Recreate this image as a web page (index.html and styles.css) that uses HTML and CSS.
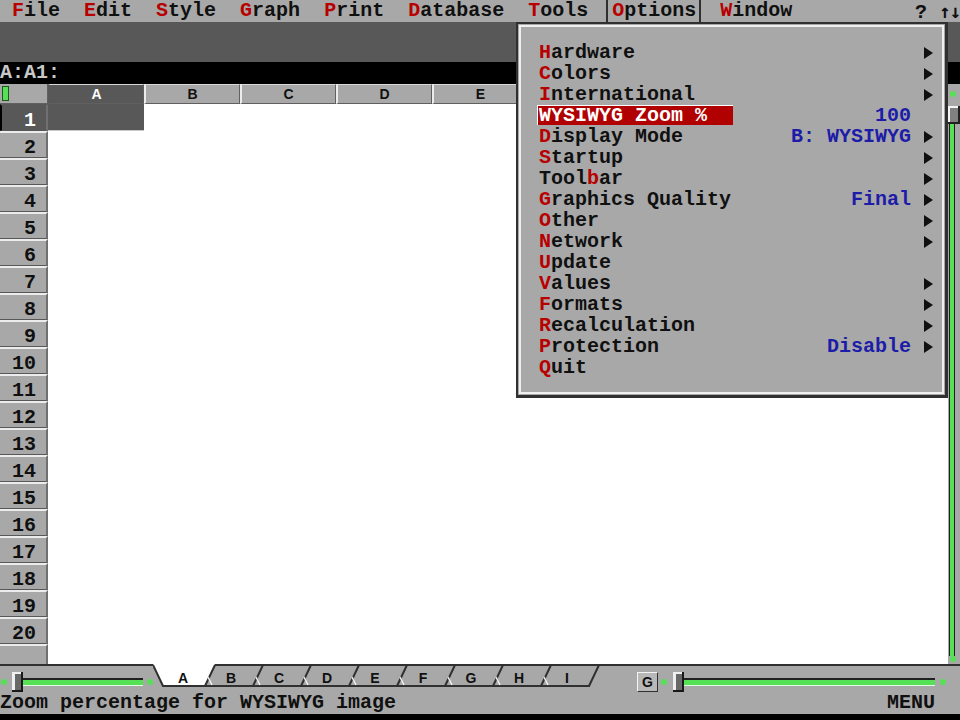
FILE: index.html
```html
<!DOCTYPE html>
<html>
<head>
<meta charset="utf-8">
<link rel="stylesheet" href="styles.css">
</head>
<body>
<div class="screen">
  <div class="menubar">
    <span class="mi"><span class="hk">F</span>ile</span>
    <span class="mi"><span class="hk">E</span>dit</span>
    <span class="mi"><span class="hk">S</span>tyle</span>
    <span class="mi"><span class="hk">G</span>raph</span>
    <span class="mi"><span class="hk">P</span>rint</span>
    <span class="mi"><span class="hk">D</span>atabase</span>
    <span class="mi"><span class="hk">T</span>ools</span>
    <span class="mi opt"><span class="hk">O</span>ptions</span>
    <span class="mi"><span class="hk">W</span>indow</span>
    <span class="help">? <span class="arrows">↑↓</span></span>
  </div>
  <div class="toolbar"></div>
  <div class="formula">A:A1:</div>
  <div class="work">
    <div class="sheet">
      <div class="colhead">
        <div class="corner"><span class="cur"></span></div>
        <div class="ch sel">A</div>
        <div class="ch">B</div>
        <div class="ch">C</div>
        <div class="ch">D</div>
        <div class="ch">E</div>
        <div class="ch rest"></div>
      </div>
      <div class="row"><div class="rh sel">1</div><div class="cell sel"></div></div>
      <div class="row"><div class="rh">2</div></div>
      <div class="row"><div class="rh">3</div></div>
      <div class="row"><div class="rh">4</div></div>
      <div class="row"><div class="rh">5</div></div>
      <div class="row"><div class="rh">6</div></div>
      <div class="row"><div class="rh">7</div></div>
      <div class="row"><div class="rh">8</div></div>
      <div class="row"><div class="rh">9</div></div>
      <div class="row"><div class="rh">10</div></div>
      <div class="row"><div class="rh">11</div></div>
      <div class="row"><div class="rh">12</div></div>
      <div class="row"><div class="rh">13</div></div>
      <div class="row"><div class="rh">14</div></div>
      <div class="row"><div class="rh">15</div></div>
      <div class="row"><div class="rh">16</div></div>
      <div class="row"><div class="rh">17</div></div>
      <div class="row"><div class="rh">18</div></div>
      <div class="row"><div class="rh">19</div></div>
      <div class="row"><div class="rh">20</div></div>
      <div class="filler"><div class="rh blank"></div></div>
    </div>
    <svg class="lane" width="12" height="580" viewBox="0 0 12 580">
      <rect x="0" y="0" width="12" height="580" fill="#a8a8a8"/>
      <circle cx="5" cy="10" r="3" fill="#55e055"/>
      <rect x="0" y="22" width="12" height="18" fill="#808080"/>
      <rect x="0" y="22" width="12" height="2" fill="#f4f4f4"/>
      <rect x="0" y="22" width="2" height="18" fill="#f4f4f4"/>
      <rect x="10" y="22" width="2" height="18" fill="#202020"/>
      <rect x="0" y="38" width="12" height="2" fill="#202020"/>
      <rect x="1" y="40" width="1" height="532" fill="#202020"/>
      <rect x="2" y="40" width="4" height="532" fill="#55e055"/>
      <rect x="6" y="40" width="1" height="532" fill="#202020"/>
      <circle cx="5" cy="575" r="3" fill="#55e055"/>
    </svg>
  </div>
  <div class="tabbar">
    <svg class="hslider left" width="153" height="28" viewBox="0 0 153 28">
      <circle cx="4" cy="18" r="3" fill="#55e055"/>
      <rect x="23" y="14" width="120" height="2" fill="#202020"/>
      <rect x="23" y="16" width="120" height="5" fill="#55e055"/>
      <rect x="23" y="21" width="120" height="1" fill="#e0ffe0"/>
      <circle cx="150" cy="18" r="3" fill="#55e055"/>
      <rect x="12" y="8" width="11" height="20" fill="#686868"/>
      <rect x="12" y="8" width="3" height="20" fill="#f0f0f0"/>
      <rect x="12" y="8" width="11" height="2" fill="#f0f0f0"/>
      <rect x="21" y="8" width="2" height="20" fill="#181818"/>
      <rect x="12" y="26" width="11" height="2" fill="#181818"/>
    </svg>
    <svg class="tabs" width="452" height="28" viewBox="0 0 452 28">
      <polygon points="0,0 10,22 52,22 62,0" fill="#ffffff"/>
      <polyline points="0,1 10,22 52,22 62,1" fill="none" stroke="#303030" stroke-width="2"/>
      <path d="M52 22H437 M100 22L110 1 M148 22L158 1 M196 22L206 1 M244 22L254 1 M292 22L302 1 M340 22L350 1 M388 22L398 1 M436 22L446 1" fill="none" stroke="#303030" stroke-width="2"/>
      <path d="M55 13L59 21 M103 13L107 21 M151 13L155 21 M199 13L203 21 M247 13L251 21 M295 13L299 21 M343 13L347 21 M391 13L395 21" fill="none" stroke="#f0f0f0" stroke-width="1.5"/>
      <text x="30" y="19" class="tl">A</text>
      <text x="78" y="19" class="tl">B</text>
      <text x="126" y="19" class="tl">C</text>
      <text x="174" y="19" class="tl">D</text>
      <text x="222" y="19" class="tl">E</text>
      <text x="270" y="19" class="tl">F</text>
      <text x="318" y="19" class="tl">G</text>
      <text x="366" y="19" class="tl">H</text>
      <text x="414" y="19" class="tl">I</text>
    </svg>
    <div class="gbtn">G</div>
    <svg class="hslider right" width="289" height="28" viewBox="0 0 289 28">
      <circle cx="5" cy="18" r="3" fill="#55e055"/>
      <rect x="25" y="14" width="251" height="2" fill="#202020"/>
      <rect x="25" y="16" width="251" height="5" fill="#55e055"/>
      <rect x="25" y="21" width="251" height="1" fill="#e0ffe0"/>
      <circle cx="284" cy="18" r="3" fill="#55e055"/>
      <rect x="14" y="8" width="11" height="20" fill="#686868"/>
      <rect x="14" y="8" width="3" height="20" fill="#f0f0f0"/>
      <rect x="14" y="8" width="11" height="2" fill="#f0f0f0"/>
      <rect x="23" y="8" width="2" height="20" fill="#181818"/>
      <rect x="14" y="26" width="11" height="2" fill="#181818"/>
    </svg>
  </div>
  <div class="status"><span>Zoom percentage for WYSIWYG image</span><span>MENU</span></div>
  <div class="bottom"></div>

  <div class="menu">
    <div class="menu-in">
      <div class="item"><span class="lab"><span class="hk">H</span>ardware</span><span class="val"></span><span class="arr"><span class="tri"></span></span></div>
      <div class="item"><span class="lab"><span class="hk">C</span>olors</span><span class="val"></span><span class="arr"><span class="tri"></span></span></div>
      <div class="item"><span class="lab"><span class="hk">I</span>nternational</span><span class="val"></span><span class="arr"><span class="tri"></span></span></div>
      <div class="item"><span class="lab hl">WYSIWYG Zoom %</span><span class="val">100</span><span class="arr"></span></div>
      <div class="item"><span class="lab"><span class="hk">D</span>isplay Mode</span><span class="val">B: WYSIWYG</span><span class="arr"><span class="tri"></span></span></div>
      <div class="item"><span class="lab"><span class="hk">S</span>tartup</span><span class="val"></span><span class="arr"><span class="tri"></span></span></div>
      <div class="item"><span class="lab">Tool<span class="hk">b</span>ar</span><span class="val"></span><span class="arr"><span class="tri"></span></span></div>
      <div class="item"><span class="lab"><span class="hk">G</span>raphics Quality</span><span class="val">Final</span><span class="arr"><span class="tri"></span></span></div>
      <div class="item"><span class="lab"><span class="hk">O</span>ther</span><span class="val"></span><span class="arr"><span class="tri"></span></span></div>
      <div class="item"><span class="lab"><span class="hk">N</span>etwork</span><span class="val"></span><span class="arr"><span class="tri"></span></span></div>
      <div class="item"><span class="lab"><span class="hk">U</span>pdate</span><span class="val"></span><span class="arr"></span></div>
      <div class="item"><span class="lab"><span class="hk">V</span>alues</span><span class="val"></span><span class="arr"><span class="tri"></span></span></div>
      <div class="item"><span class="lab"><span class="hk">F</span>ormats</span><span class="val"></span><span class="arr"><span class="tri"></span></span></div>
      <div class="item"><span class="lab"><span class="hk">R</span>ecalculation</span><span class="val"></span><span class="arr"><span class="tri"></span></span></div>
      <div class="item"><span class="lab"><span class="hk">P</span>rotection</span><span class="val">Disable</span><span class="arr"><span class="tri"></span></span></div>
      <div class="item"><span class="lab"><span class="hk">Q</span>uit</span><span class="val"></span><span class="arr"></span></div>
    </div>
  </div>
</div>
</body>
</html>
```
FILE: styles.css
```css
* { box-sizing: border-box; margin: 0; padding: 0; }
html, body { width: 960px; height: 720px; overflow: hidden; background: #000; }
body {
  font-family: "Liberation Mono", "DejaVu Sans Mono", monospace;
  font-weight: bold;
  font-size: 20px;
  color: #101010;
}
.screen { position: relative; width: 960px; height: 720px; display: flex; flex-direction: column; }

.menubar { height: 22px; line-height: 22px; background: #a8a8a8; display: flex; white-space: pre; flex: none; }
.mi { padding: 0 12px; }
.mi.opt { margin-left: 6px; margin-right: 7px; padding: 0 3px 0 4px; border-left: 2px solid #303030; border-right: 2px solid #303030; }
.hk { color: #b80000; }
.help { margin-left: auto; }
.arrows { font-family: "DejaVu Sans Mono", "Liberation Mono", monospace; font-size: 19px; letter-spacing: -1px; }

.toolbar { height: 40px; background: #585858; flex: none; }
.formula { height: 22px; line-height: 22px; background: #000; color: #c8c8c8; flex: none; }

.work { height: 580px; display: flex; flex: none; }
.sheet { width: 948px; background: #fff; display: flex; flex-direction: column; overflow: hidden; }
.lane { display: block; flex: none; }

.colhead { height: 20px; display: flex; flex: none; overflow: hidden; background: #a8a8a8; }
.corner { width: 48px; flex: none; background: #a8a8a8; border-right: 1px solid #606060; border-bottom: 1px solid #606060; padding: 2px 0 0 2px; }
.cur { display: block; width: 7px; height: 15px; background: #55e055; border: 1px solid #1a5a1a; }
.ch {
  width: 96px; flex: none;
  font-family: "Liberation Sans", Arial, sans-serif; font-weight: bold; font-size: 14px;
  text-align: center; line-height: 18px;
  background: #a8a8a8; color: #101010;
  border-left: 2px solid #ececec; border-top: 1px solid #d8d8d8;
  border-right: 1px solid #606060; border-bottom: 1px solid #606060;
}
.ch.sel { background: #585858; color: #fff; border-left-color: #585858; }
.ch.rest { flex: 1; }

.row { height: 27px; display: flex; flex: none; }
.rh {
  width: 48px; flex: none; background: #a8a8a8; text-align: right;
  padding: 4px 10px 0 0; line-height: 22px;
  border-top: 2px solid #ececec; border-bottom: 1px solid #585858; border-right: 2px solid #707070;
}
.rh.sel { background: #585858; color: #fff; border-left: 2px solid #000; border-top-color: #585858; }
.cell.sel { width: 96px; background: #585858; border-bottom: 1px solid #c8c8c8; }
.filler { flex: 1; display: flex; }
.rh.blank { border-bottom: none; }

.tabbar {
  height: 28px; flex: none; display: flex; align-items: flex-start;
  background: linear-gradient(#303030, #303030) top left / 100% 2px no-repeat, #a8a8a8;
}
.hslider, .tabs { display: block; flex: none; }
.tl { font-family: "Liberation Sans", Arial, sans-serif; font-weight: bold; font-size: 14px; text-anchor: middle; fill: #101010; }
.gbtn {
  width: 21px; height: 20px; margin: 8px 1px 0 32px; flex: none;
  font-family: "Liberation Sans", Arial, sans-serif; font-weight: bold; font-size: 14px;
  line-height: 18px; text-align: center;
  background: #b8b8b8; color: #101010;
  border: 1px solid; border-color: #f4f4f4 #303030 #303030 #f4f4f4;
}

.status { height: 22px; line-height: 22px; background: #a8a8a8; display: flex; justify-content: space-between; padding-right: 25px; flex: none; white-space: pre; }
.bottom { flex: 1; background: #000; }

.menu {
  position: absolute; left: 516px; top: 22px; width: 432px; height: 376px;
  background: #a8a8a8; padding: 1px;
  border-left: 2px solid #303030; border-top: 2px solid #303030;
  border-right: 3px solid #303030; border-bottom: 3px solid #303030;
}
.menu-in { height: 100%; border: 2px solid #f0f0f0; padding: 15px 6px 0 18px; }
.item { display: grid; grid-template-columns: 1fr auto 25px; height: 21px; line-height: 21px; white-space: pre; }
.lab.hl {
  display: inline-block; width: 196px; height: 20px; line-height: 19px;
  margin-left: -2px; padding-left: 1px;
  background: #b00000; color: #fff;
  border-left: 1px solid #fff; border-top: 1px solid #fff;
  justify-self: start;
}
.val { color: #1c1ca8; text-align: right; }
.arr { display: flex; justify-content: flex-end; align-items: center; }
.tri { width: 0; height: 0; border-left: 9px solid #101010; border-top: 6px solid transparent; border-bottom: 6px solid transparent; margin-right: 3px; }
```
